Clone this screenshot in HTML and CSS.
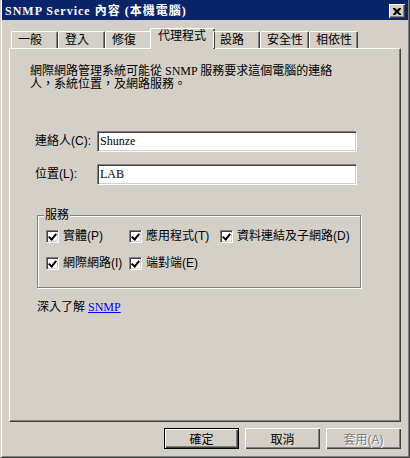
FILE: index.html
```html
<!DOCTYPE html>
<html>
<head>
  <title>SNMP Service 內容</title>
  <link rel="stylesheet" href="styles.css">
</head>
<body>
  <div class="window">
    <div class="titlebar">
      <span class="title">SNMP Service 內容 (本機電腦)</span>
      <button class="close" type="button">
        <svg width="8" height="7" viewBox="0 0 8 7">
          <path d="M0 0h2l2 2 2-2h2v1l-2.5 2.5L8 6v1H6L4 5 2 7H0V6l2.5-2.5L0 1z" fill="#000"/>
        </svg>
      </button>
    </div>

    <div class="body">
      <ul class="tabs">
        <li class="tab">一般</li>
        <li class="tab">登入</li>
        <li class="tab">修復</li>
        <li class="tab active">代理程式</li>
        <li class="tab">設路</li>
        <li class="tab">安全性</li>
        <li class="tab">相依性</li>
      </ul>

      <div class="panel">
        <p class="intro">網際網路管理系統可能從 SNMP 服務要求這個電腦的連絡<br>人，系統位置，及網路服務。</p>

        <div class="field">
          <label class="field-label">連絡人(C):</label>
          <input class="text" type="text" value="Shunze">
        </div>
        <div class="field">
          <label class="field-label">位置(L):</label>
          <input class="text" type="text" value="LAB">
        </div>

        <fieldset class="group">
          <legend>服務</legend>
          <div class="checks">
            <label class="check"><span class="box checked"></span>實體(P)</label>
            <label class="check"><span class="box checked"></span>應用程式(T)</label>
            <label class="check"><span class="box checked"></span>資料連結及子網路(D)</label>
            <label class="check"><span class="box checked"></span>網際網路(I)</label>
            <label class="check"><span class="box checked"></span>端對端(E)</label>
          </div>
        </fieldset>

        <p class="more">深入了解 <a href="#">SNMP</a></p>
      </div>

      <div class="buttons">
        <button class="btn default" type="button">確定</button>
        <button class="btn" type="button">取消</button>
        <button class="btn" type="button" disabled>套用(A)</button>
      </div>
    </div>
  </div>
</body>
</html>
```

FILE: styles.css
```css
html, body {
  margin: 0;
  padding: 0;
}

body {
  background: #d4d0c8;
  font-family: "Liberation Serif", "Noto Sans CJK TC", serif;
  font-size: 12px;
  line-height: 13px;
  color: #000;
}

.window {
  width: 410px;
  height: 458px;
  box-sizing: border-box;
  padding: 0 1px 1px 1px;
  border: 1px solid;
  border-top: 0;
  border-color: #d4d0c8 #404040 #404040 #d4d0c8;
  box-shadow: inset 1px 0 #fff, inset -1px -1px #808080;
  display: flex;
  flex-direction: column;
}

/* title bar */
.titlebar {
  height: 20px;
  background: #0a246a;
  color: #fff;
  display: flex;
  align-items: flex-start;
  justify-content: space-between;
  padding-left: 3px;
}

.title {
  font-weight: bold;
  letter-spacing: 1px;
  margin-top: 5px;
}

.close {
  width: 16px;
  height: 14px;
  margin: 4px 3px 0 0;
  padding: 0;
  border: 0;
  background: #d4d0c8;
  box-shadow: inset 1px 1px #fff, inset -1px -1px #404040, inset -2px -2px #808080;
  display: flex;
  align-items: center;
  justify-content: center;
}

.body {
  flex: 1;
  padding: 8px 7px 7px 7px;
  display: flex;
  flex-direction: column;
}

/* tabs */
.tabs {
  list-style: none;
  margin: 0;
  padding: 0 0 0 2px;
  height: 20px;
  display: flex;
  align-items: flex-end;
  position: relative;
  z-index: 1;
}

.tab {
  height: 17px;
  box-sizing: border-box;
  min-width: 47px;
  padding: 2px 5px 0 6px;
  border: 1px solid #fff;
  border-bottom: 0;
  border-right-color: #404040;
  border-radius: 2px 2px 0 0;
  box-shadow: inset -1px 0 #808080;
  white-space: nowrap;
}

.tab.active {
  height: 21px;
  margin: 0 -2px -1px -2px;
  padding: 1px 8px 0 7px;
  background: #d4d0c8;
}

.panel {
  height: 374px;
  box-sizing: border-box;
  border: 1px solid #fff;
  border-right-color: #404040;
  border-bottom-color: #404040;
  box-shadow: inset -1px -1px #808080;
  padding: 16px 0 0 20px;
}

.intro {
  margin: 0;
  line-height: 13px;
}

.field {
  display: flex;
  align-items: center;
  margin: 40px 0 0 5px;
}
.field + .field {
  margin-top: 12px;
}

.field-label {
  width: 62px;
  font-family: "Liberation Sans", "Noto Sans CJK TC", sans-serif;
}

.text {
  width: 260px;
  height: 21px;
  box-sizing: border-box;
  margin: 0;
  padding: 0 2px;
  border: 1px solid;
  border-color: #808080 #fff #fff #808080;
  box-shadow: inset 1px 1px #404040, inset -1px -1px #d4d0c8;
  background: #fff;
  font-family: "Liberation Serif", "Noto Sans CJK TC", serif;
  font-size: 12px;
  outline: none;
}

/* services group */
.group {
  width: 324px;
  box-sizing: border-box;
  margin: 23px 0 0 7px;
  padding: 7px 0 17px 8px;
  border: 1px solid #808080;
  box-shadow: 1px 1px #fff, inset 1px 1px #fff;
}

.group legend {
  margin-left: -2px;
  padding: 0 1px;
  line-height: 14px;
  background: #d4d0c8;
}

.checks {
  display: grid;
  grid-template-columns: 83px 91px auto;
  row-gap: 13px;
}

.check {
  display: flex;
  align-items: center;
  height: 14px;
  white-space: nowrap;
  font-family: "Liberation Sans", "Noto Sans CJK TC", sans-serif;
}

.box {
  width: 13px;
  height: 13px;
  box-sizing: border-box;
  margin-right: 4px;
  border: 1px solid;
  border-color: #808080 #fff #fff #808080;
  box-shadow: inset 1px 1px #404040, inset -1px -1px #d4d0c8;
  background: #fff;
  position: relative;
}
.box.checked::after {
  content: "";
  position: absolute;
  left: 3px;
  top: 1px;
  width: 3px;
  height: 6px;
  border: solid #000;
  border-width: 0 2px 2px 0;
  transform: rotate(40deg);
}

.more {
  margin: 13px 0 0 7px;
}
.more a {
  color: #0000ff;
}

/* bottom buttons */
.buttons {
  display: flex;
  justify-content: flex-end;
  gap: 6px;
  margin-top: 6px;
}

.btn {
  width: 75px;
  height: 21px;
  padding: 0;
  border: 0;
  background: #d4d0c8;
  box-shadow: inset 1px 1px #fff, inset -1px -1px #404040, inset -2px -2px #808080;
  font-family: "Liberation Sans", "Noto Sans CJK TC", sans-serif;
  font-size: 12px;
  color: #000;
}
.btn.default {
  border: 1px solid #000;
}
.btn:disabled {
  color: #808080;
  text-shadow: 1px 1px #fff;
}
```
